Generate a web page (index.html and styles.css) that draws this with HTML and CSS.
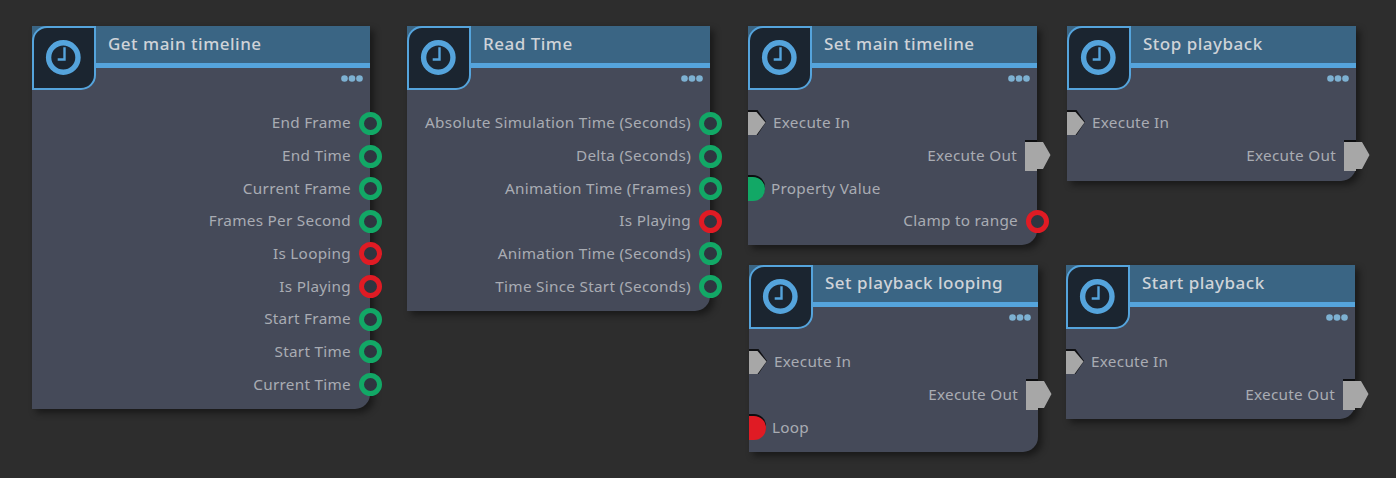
FILE: index.html
```html
<!DOCTYPE html>
<html lang="en">
<head>
<meta charset="utf-8">
<title>Nodes</title>
<link rel="stylesheet" href="styles.css">
</head>
<body>
<svg class="defs" width="0" height="0" aria-hidden="true">
  <symbol id="clock" viewBox="0 0 40 40">
    <circle cx="19.300" cy="19.500" r="14.700" fill="none" stroke="#55a4dc" stroke-width="5.400"/>
    <path d="M20.500 9.300V21.500H13.700" fill="none" stroke="#55a4dc" stroke-width="2.400"/>
  </symbol>
  <symbol id="dots" viewBox="0 0 22 7">
    <circle cx="3.500" cy="3.500" r="3.300"/><circle cx="11" cy="3.500" r="3.300"/><circle cx="18.500" cy="3.500" r="3.300"/>
  </symbol>
  <symbol id="in" viewBox="0 0 18 26">
    <path d="M0 0H9.500L18 12L9.500 25H0Z" fill="#101114"/>
    <path d="M0 2H8.500L17.500 12.500L8.500 25H0Z" fill="#a7a7a7"/>
  </symbol>
  <symbol id="out" viewBox="0 0 26 32">
    <path d="M0 0H12V2H0Z" fill="#0d0e10"/>
    <path d="M0 2H18L25.500 15L18 29H12V31H0Z" fill="#a7a7a7"/>
  </symbol>
</svg>

<main class="canvas">

<section class="node n1">
  <header class="head"><div class="badge"><svg class="clock"><use href="#clock"/></svg></div><h2>Get main timeline</h2></header>
  <svg class="dots"><use href="#dots"/></svg>
  <div class="rows">
    <div class="row"><span>End Frame</span><i class="port green"></i></div>
    <div class="row"><span>End Time</span><i class="port green"></i></div>
    <div class="row"><span>Current Frame</span><i class="port green"></i></div>
    <div class="row"><span>Frames Per Second</span><i class="port green"></i></div>
    <div class="row"><span>Is Looping</span><i class="port red"></i></div>
    <div class="row"><span>Is Playing</span><i class="port red"></i></div>
    <div class="row"><span>Start Frame</span><i class="port green"></i></div>
    <div class="row"><span>Start Time</span><i class="port green"></i></div>
    <div class="row"><span>Current Time</span><i class="port green"></i></div>
  </div>
</section>

<section class="node n2">
  <header class="head"><div class="badge"><svg class="clock"><use href="#clock"/></svg></div><h2>Read Time</h2></header>
  <svg class="dots"><use href="#dots"/></svg>
  <div class="rows">
    <div class="row"><span>Absolute Simulation Time (Seconds)</span><i class="port green"></i></div>
    <div class="row"><span>Delta (Seconds)</span><i class="port green"></i></div>
    <div class="row"><span>Animation Time (Frames)</span><i class="port green"></i></div>
    <div class="row"><span>Is Playing</span><i class="port red"></i></div>
    <div class="row"><span>Animation Time (Seconds)</span><i class="port green"></i></div>
    <div class="row"><span>Time Since Start (Seconds)</span><i class="port green"></i></div>
  </div>
</section>

<section class="node n3">
  <header class="head"><div class="badge"><svg class="clock"><use href="#clock"/></svg></div><h2>Set main timeline</h2></header>
  <svg class="dots"><use href="#dots"/></svg>
  <div class="rows">
    <div class="row left"><svg class="in"><use href="#in"/></svg><span>Execute In</span></div>
    <div class="row"><span>Execute Out</span><svg class="out"><use href="#out"/></svg></div>
    <div class="row left"><i class="half green"></i><span>Property Value</span></div>
    <div class="row"><span>Clamp to range</span><i class="port red"></i></div>
  </div>
</section>

<section class="node n4">
  <header class="head"><div class="badge"><svg class="clock"><use href="#clock"/></svg></div><h2>Stop playback</h2></header>
  <svg class="dots"><use href="#dots"/></svg>
  <div class="rows">
    <div class="row left"><svg class="in"><use href="#in"/></svg><span>Execute In</span></div>
    <div class="row"><span>Execute Out</span><svg class="out"><use href="#out"/></svg></div>
  </div>
</section>

<section class="node n5">
  <header class="head"><div class="badge"><svg class="clock"><use href="#clock"/></svg></div><h2>Set playback looping</h2></header>
  <svg class="dots"><use href="#dots"/></svg>
  <div class="rows">
    <div class="row left"><svg class="in"><use href="#in"/></svg><span>Execute In</span></div>
    <div class="row"><span>Execute Out</span><svg class="out"><use href="#out"/></svg></div>
    <div class="row left"><i class="half red"></i><span>Loop</span></div>
  </div>
</section>

<section class="node n6">
  <header class="head"><div class="badge"><svg class="clock"><use href="#clock"/></svg></div><h2>Start playback</h2></header>
  <svg class="dots"><use href="#dots"/></svg>
  <div class="rows">
    <div class="row left"><svg class="in"><use href="#in"/></svg><span>Execute In</span></div>
    <div class="row"><span>Execute Out</span><svg class="out"><use href="#out"/></svg></div>
  </div>
</section>

</main>
</body>
</html>
```

FILE: styles.css
```css
* { box-sizing: border-box; }
html, body { margin: 0; height: 100%; }
body { background: #2d2d2d; overflow: hidden; font-family: "Noto Sans", "Open Sans", sans-serif; }
.defs { position: absolute; }
.canvas { position: relative; width: 1396px; height: 478px; }

.node {
  position: absolute;
  display: flex;
  flex-direction: column;
  background: #454a59;
  border-bottom-right-radius: 15px;
  box-shadow: 4px 4px 7px rgba(0, 0, 0, .45);
}
.n1 { left: 32px; top: 26px; width: 338px; height: 383px; }
.n2 { left: 407px; top: 26px; width: 303px; height: 285px; }
.n3 { left: 748px; top: 26px; width: 289px; height: 219px; }
.n4 { left: 1067px; top: 26px; width: 289px; height: 155px; }
.n5 { left: 749px; top: 265px; width: 289px; height: 187px; }
.n6 { left: 1066px; top: 265px; width: 289px; height: 154px; }

.head {
  display: flex;
  height: 42px;
  flex: none;
  background: #3a6584;
  border-bottom: 5px solid #55a4dc;
}
.badge {
  flex: none;
  display: flex;
  align-items: center;
  justify-content: center;
  width: 64px;
  height: 64px;
  background: #1b2530;
  border: 2px solid #55a4dc;
  border-radius: 15px 0 15px 0;
}
.clock { width: 40px; height: 40px; }
.head h2 {
  margin: 0;
  padding-left: 12px;
  font-size: 17px;
  font-weight: 500;
  line-height: 35px;
  letter-spacing: .5px;
  color: #cfd3d8;
}
.dots {
  flex: none;
  align-self: flex-end;
  width: 22px;
  height: 7px;
  margin: 7px 7px 0 0;
  fill: #7db1d2;
}
.rows { display: flex; flex-direction: column; margin-top: 25.100px; }
.row {
  display: flex;
  align-items: center;
  justify-content: flex-end;
  height: 32.650px;
  font-size: 15.300px;
  letter-spacing: .28px;
  color: #a9acb3;
  white-space: nowrap;
}
.row span { margin-bottom: 2px; }
.row.left { justify-content: flex-start; }
.port {
  flex: none;
  width: 23px;
  height: 23px;
  margin: 0 -12px 0 8px;
  border: 5px solid;
  border-radius: 50%;
  background: #2f3540;
}
.port.green { border-color: #12a866; }
.port.red { border-color: #e01b24; }
.half {
  flex: none;
  width: 17px;
  height: 24px;
  margin-right: 6px;
  border-radius: 0 12px 12px 0;
  box-shadow: 0 -2px 0 #0d0e10;
}
.half.green { background: #12a866; }
.half.red { background: #e01b24; }
.in { flex: none; width: 18px; height: 26px; margin-right: 7px; }
.out { flex: none; width: 26px; height: 32px; margin: 0 -14px 0 8px; }
```
